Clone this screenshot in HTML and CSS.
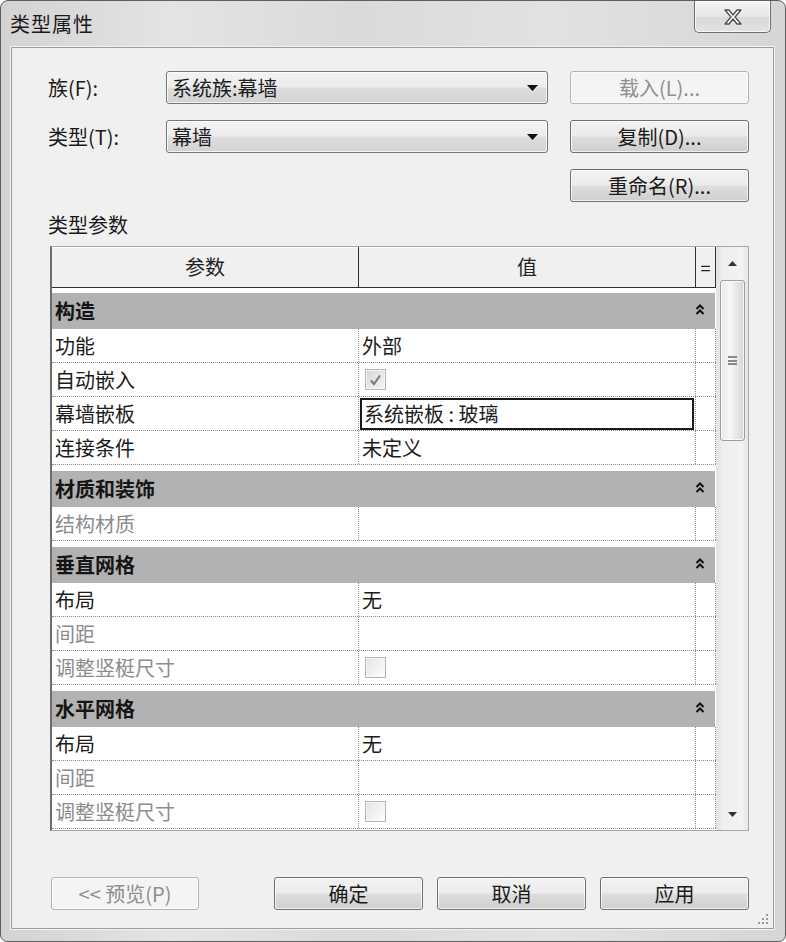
FILE: index.html
```html
<!DOCTYPE html>
<html lang="zh-CN">
<head>
<meta charset="utf-8">
<title>类型属性</title>
<link rel="stylesheet" href="styles.css">
</head>
<body>
<div class="window">
  <div class="titlebar">
    <span class="title">类型属性</span>
    <div class="close">
      <svg width="18" height="16" viewBox="0 0 18 16"><polygon points="1,1 5,1 9,6 13,1 17,1 11,8 17,15 13,15 9,10 5,15 1,15 7,8" fill="#fbfbfb" stroke="#4d4d4d" stroke-width="1.3" stroke-linejoin="round"/></svg>
    </div>
  </div>
  <div class="panel">
    <div class="form">
      <span class="lbl">族(F):</span>
      <div class="select"><span>系统族:幕墙</span><svg class="arrow" width="11" height="6" viewBox="0 0 11 6"><polygon points="0,0 11,0 5.5,6" fill="#111"/></svg></div>
      <div class="btn disabled">载入(L)...</div>
      <span class="lbl">类型(T):</span>
      <div class="select"><span>幕墙</span><svg class="arrow" width="11" height="6" viewBox="0 0 11 6"><polygon points="0,0 11,0 5.5,6" fill="#111"/></svg></div>
      <div class="btn">复制(D)...</div>
      <span class="btn-slot">
        <span class="btn">重命名(R)...</span>
      </span>
    </div>
    <div class="section-label">类型参数</div>
    <div class="grid">
      <div class="grid-main">
        <div class="hdr">
          <div class="c name">参数</div>
          <div class="c val">值</div>
          <div class="c eq">=</div>
        </div>

        <div class="group first"><span>构造</span><svg class="chev" width="10" height="13" viewBox="0 0 10 13"><path d="M1.5 6 L5 2.5 L8.5 6 M1.5 11 L5 7.5 L8.5 11" fill="none" stroke="#111" stroke-width="2"/></svg></div>
        <div class="row"><div class="c name">功能</div><div class="c val">外部</div><div class="c eq"></div></div>
        <div class="row"><div class="c name">自动嵌入</div><div class="c val"><span class="check on"><svg width="13" height="12" viewBox="0 0 13 12"><path d="M2 6.5 L5 10 L11 1.5" fill="none" stroke="#777" stroke-width="2"/></svg></span></div><div class="c eq"></div></div>
        <div class="row"><div class="c name">幕墙嵌板</div><div class="c val sel"><span class="selbox">系统嵌板 : 玻璃</span></div><div class="c eq"></div></div>
        <div class="row"><div class="c name">连接条件</div><div class="c val">未定义</div><div class="c eq"></div></div>

        <div class="group"><span>材质和装饰</span><svg class="chev" width="10" height="13" viewBox="0 0 10 13"><path d="M1.5 6 L5 2.5 L8.5 6 M1.5 11 L5 7.5 L8.5 11" fill="none" stroke="#111" stroke-width="2"/></svg></div>
        <div class="row"><div class="c name dim">结构材质</div><div class="c val"></div><div class="c eq"></div></div>

        <div class="group"><span>垂直网格</span><svg class="chev" width="10" height="13" viewBox="0 0 10 13"><path d="M1.5 6 L5 2.5 L8.5 6 M1.5 11 L5 7.5 L8.5 11" fill="none" stroke="#111" stroke-width="2"/></svg></div>
        <div class="row"><div class="c name">布局</div><div class="c val">无</div><div class="c eq"></div></div>
        <div class="row"><div class="c name dim">间距</div><div class="c val"></div><div class="c eq"></div></div>
        <div class="row"><div class="c name dim">调整竖梃尺寸</div><div class="c val"><span class="check"></span></div><div class="c eq"></div></div>

        <div class="group"><span>水平网格</span><svg class="chev" width="10" height="13" viewBox="0 0 10 13"><path d="M1.5 6 L5 2.5 L8.5 6 M1.5 11 L5 7.5 L8.5 11" fill="none" stroke="#111" stroke-width="2"/></svg></div>
        <div class="row"><div class="c name">布局</div><div class="c val">无</div><div class="c eq"></div></div>
        <div class="row"><div class="c name dim">间距</div><div class="c val"></div><div class="c eq"></div></div>
        <div class="row"><div class="c name dim">调整竖梃尺寸</div><div class="c val"><span class="check"></span></div><div class="c eq"></div></div>
      </div>
      <div class="scroll">
        <div class="sb-btn"><svg width="9" height="5" viewBox="0 0 9 5"><polygon points="0,5 9,5 4.5,0" fill="#333"/></svg></div>
        <div class="sb-track">
          <div class="thumb"><span class="grip"></span></div>
        </div>
        <div class="sb-btn"><svg width="9" height="5" viewBox="0 0 9 5"><polygon points="0,0 9,0 4.5,5" fill="#333"/></svg></div>
      </div>
    </div>
    <div class="footer">
      <div class="btn disabled wide">&lt;&lt; 预览(P)</div>
      <div class="actions">
        <div class="btn wide">确定</div>
        <div class="btn wide">取消</div>
        <div class="btn wide">应用</div>
      </div>
    </div>
    <svg class="sizegrip" width="12" height="13" viewBox="0 0 12 13">
      <g fill="#9a9a9a">
        <rect x="9" y="1" width="2" height="2"/>
        <rect x="5" y="5" width="2" height="2"/><rect x="9" y="5" width="2" height="2"/>
        <rect x="1" y="9" width="2" height="2"/><rect x="5" y="9" width="2" height="2"/><rect x="9" y="9" width="2" height="2"/>
      </g>
    </svg>
  </div>
</div>
</body>
</html>
```
FILE: styles.css
```css
* { box-sizing: border-box; }

html, body {
  margin: 0;
  padding: 0;
  background: #ffffff;
}

body {
  font-family: "Noto Sans CJK SC", "Noto Sans", sans-serif;
  font-size: 20px;
  color: #1c1c1c;
}

.window {
  width: 786px;
  height: 942px;
  border: 1px solid #5e5e5e;
  border-radius: 8px 8px 7px 7px;
  background: linear-gradient(to right, #d3d3d3 0%, #e4e4e4 22%, #dadada 45%, #e2e2e2 70%, #d6d6d6 100%);
  padding: 0 11px 12px 10px;
  display: flex;
  flex-direction: column;
  overflow: hidden;
}

.titlebar {
  height: 46px;
  flex: none;
  display: flex;
  justify-content: space-between;
  align-items: flex-start;
}

.title {
  margin-left: -1px;
  line-height: 46px;
  color: #1a1a1a;
  letter-spacing: 1px;
}

.close {
  width: 77px;
  height: 32px;
  margin-right: 3px;
  border: 1px solid #6e6e6e;
  border-top: none;
  border-radius: 0 0 5px 5px;
  background: linear-gradient(to bottom, #f4f4f4 0%, #e6e6e6 50%, #d9d9d9 51%, #e3e3e3 100%);
  box-shadow: inset 0 0 0 1px rgba(255,255,255,0.7);
  display: flex;
  align-items: center;
  justify-content: center;
}

.panel {
  position: relative;
  flex: 1;
  background: #f0f0f0;
  border: 1px solid #9c9c9c;
  box-shadow: 0 0 0 1px #f4f4f4;
  padding: 23px 24px 18px 36px;
  display: flex;
  flex-direction: column;
}

/* top form */
.form {
  display: grid;
  grid-template-columns: 96px 382px 179px;
  column-gap: 22px;
  grid-template-rows: 33px 33px 33px;
  row-gap: 16px;
  align-items: center;
}

.lbl {
  line-height: 24px;
  color: #1a1a1a;
  white-space: nowrap;
}

.select {
  height: 33px;
  border: 1px solid #777;
  border-radius: 3px;
  background: linear-gradient(to bottom, #f3f3f3 0%, #ececec 48%, #dedede 52%, #d2d2d2 100%);
  box-shadow: inset 0 0 0 1px rgba(255,255,255,0.75);
  display: flex;
  align-items: center;
  justify-content: space-between;
  padding: 0 9px 0 5px;
  line-height: 24px;
}

.btn {
  height: 33px;
  border: 1px solid #707070;
  border-radius: 3px;
  background: linear-gradient(to bottom, #f2f2f2 0%, #ebebeb 48%, #dddddd 52%, #cfcfcf 100%);
  box-shadow: inset 0 0 0 1px rgba(255,255,255,0.7);
  display: flex;
  align-items: center;
  justify-content: center;
  line-height: 24px;
  color: #1a1a1a;
  white-space: nowrap;
}

.btn.disabled {
  border-color: #b2b6b9;
  background: #f4f4f4;
  color: #8e8e8e;
  box-shadow: inset 0 0 0 1px #fbfbfb;
}

.btn-slot {
  grid-column: 3;
  grid-row: 3;
  display: block;
}

.section-label {
  margin-top: 11px;
  margin-bottom: 9px;
  line-height: 24px;
  color: #1a1a1a;
}

/* property grid */
.grid {
  margin-left: 2px;
  width: 699px;
  height: 585px;
  flex: none;
  display: flex;
  border: 1px solid #a8a8a8;
  border-left: 2px solid #6c6c6c;
  background: #ffffff;
}

.grid-main {
  width: 664px;
  flex: none;
  overflow: hidden;
  background: #ffffff;
}

.c {
  flex: none;
  display: flex;
  align-items: center;
  line-height: 24px;
  white-space: nowrap;
}

.c.name { width: 307px; padding-left: 3px; }
.c.val { width: 337px; padding-left: 3px; }
.c.eq { width: 20px; }

.hdr {
  height: 41px;
  display: flex;
  background: #f0f0f0;
  border-bottom: 1px solid #2e2e2e;
  box-shadow: inset 0 1px 0 #ffffff;
}

.hdr .c {
  justify-content: center;
  border-right: 1px solid #2e2e2e;
  padding-left: 0;
  color: #222;
}

.hdr .c.eq { font-size: 18px; }

.group {
  width: 663px;
  height: 36px;
  margin-top: 6px;
  background: #b2b2b2;
  display: flex;
  align-items: center;
  justify-content: space-between;
  padding: 0 10px 0 3px;
  font-weight: 700;
  line-height: 24px;
  color: #151515;
}

.group.first { margin-top: 5px; }

.chev { margin-top: -3px; }

.row {
  height: 34px;
  display: flex;
  border-bottom: 1px dotted #8a8a8a;
}

.row .c {
  border-right: 1px dotted #8a8a8a;
}

.c.dim { color: #8c8c8c; }

.c.sel { padding: 1px 1px 0 1px; align-items: stretch; }

.selbox {
  flex: 1;
  border: 2px solid #1a1a1a;
  padding-left: 2px;
  display: flex;
  align-items: center;
  line-height: 24px;
}

.check {
  width: 21px;
  height: 21px;
  margin-left: 3px;
  border: 1px solid #b5b5b5;
  background: linear-gradient(135deg, #e2e2e2 0%, #f4f4f4 60%, #ffffff 100%);
  box-shadow: inset 0 0 0 1px #f6f6f6;
  display: flex;
  align-items: center;
  justify-content: center;
}

.check.on {
  background: linear-gradient(135deg, #d6d6d6 0%, #e9e9e9 60%, #f4f4f4 100%);
}

/* scrollbar */
.scroll {
  flex: 1;
  display: flex;
  flex-direction: column;
  background: linear-gradient(to right, #e2e2e2 0%, #efefef 20%, #f2f2f2 80%, #e6e6e6 100%);
  border-left: 1px solid #e8e8e8;
}

.sb-btn {
  height: 32px;
  flex: none;
  display: flex;
  align-items: center;
  justify-content: center;
}

.sb-track {
  flex: 1;
  padding: 1px 3px 0 3px;
}

.thumb {
  height: 161px;
  border: 1px solid #9d9d9d;
  border-radius: 3px;
  background: linear-gradient(to right, #e9e9e9 0%, #f7f7f7 40%, #ececec 60%, #d6d6d6 100%);
  box-shadow: inset 0 0 0 1px rgba(255,255,255,0.8);
  display: flex;
  align-items: center;
  justify-content: center;
}

.grip {
  width: 9px;
  height: 9px;
  border-top: 2px solid #8a8a8a;
  border-bottom: 2px solid #8a8a8a;
  position: relative;
}

.grip::after {
  content: "";
  position: absolute;
  left: 0;
  right: 0;
  top: 1.5px;
  height: 2px;
  background: #8a8a8a;
}

/* footer */
.footer {
  margin-top: auto;
  display: flex;
  justify-content: space-between;
  align-items: center;
}

.btn.wide { width: 149px; }

.footer > .btn.disabled { width: 148px; margin-left: 3px; }

.actions {
  display: flex;
  gap: 14px;
}

.sizegrip {
  position: absolute;
  right: 4px;
  bottom: 2px;
}
```
